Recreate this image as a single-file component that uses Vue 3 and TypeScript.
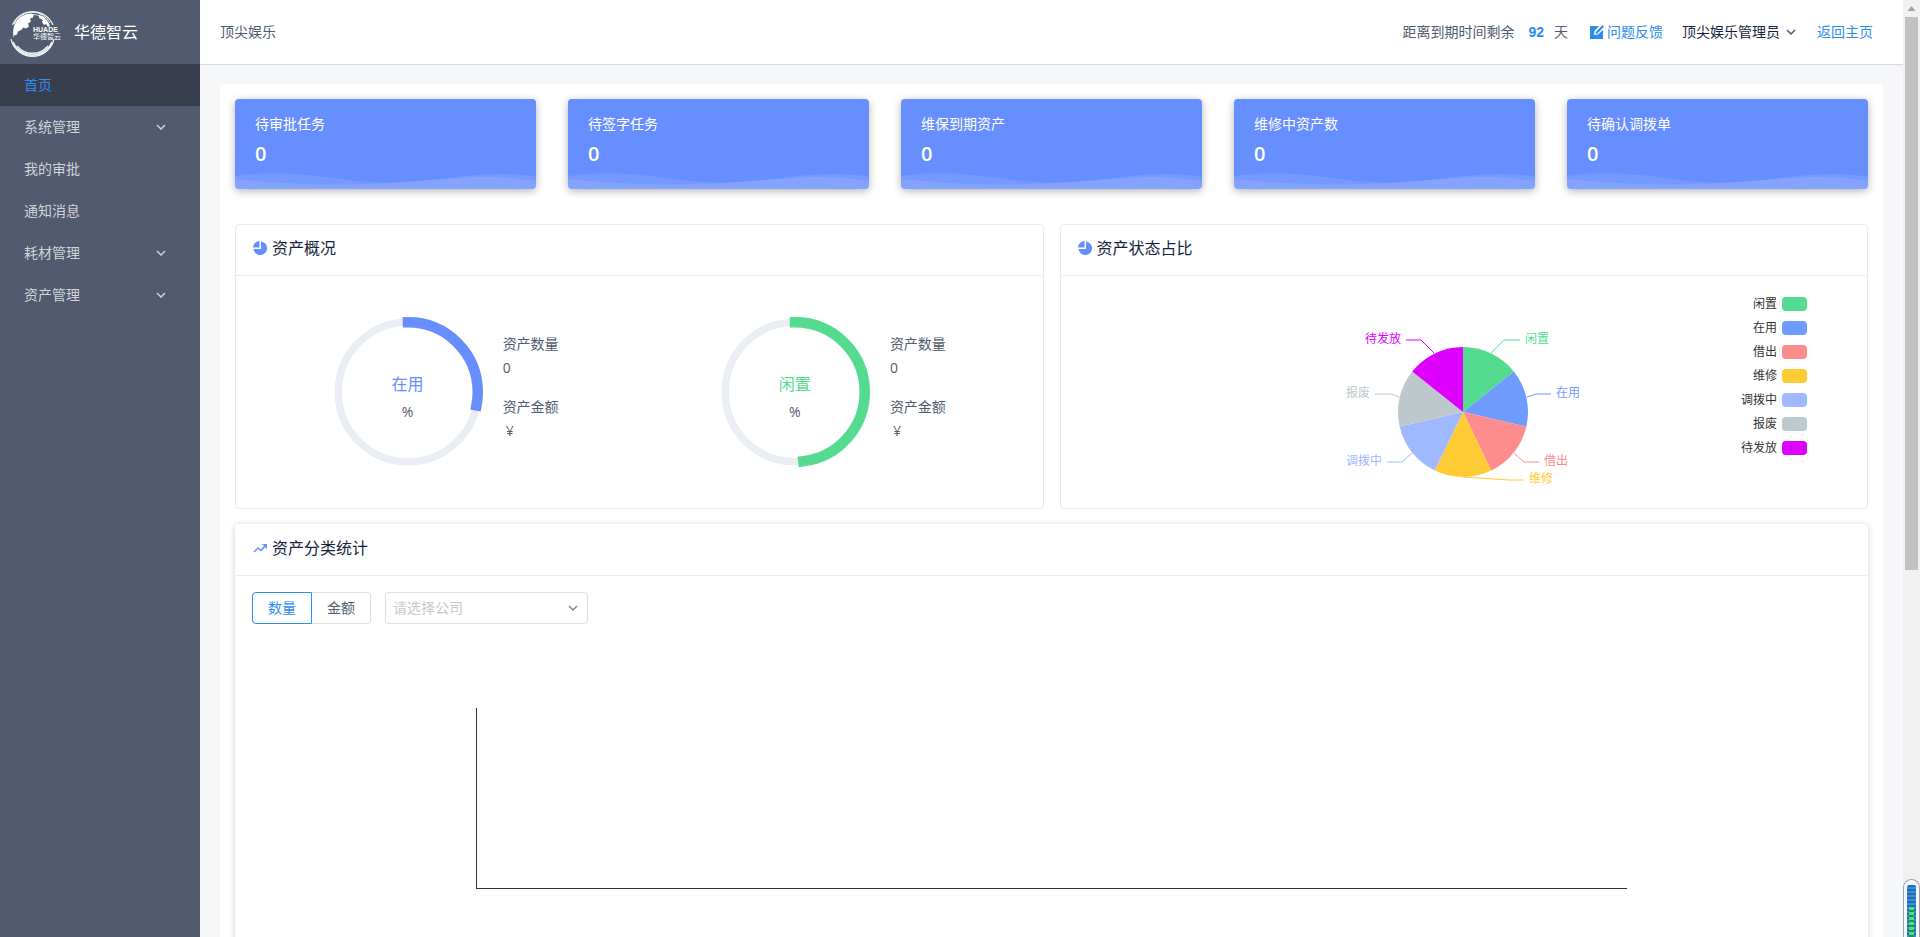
<script setup lang="ts">
import { ref } from 'vue'

interface MenuItem { label: string; expandable: boolean; active: boolean }
interface Gauge { name: string; color: string; percent: number }
interface Slice {
  name: string
  color: string
  line: string
  x: number
  y: number
  anchor: 'start' | 'end'
}

const menu: MenuItem[] = [
  { label: '首页', expandable: false, active: true },
  { label: '系统管理', expandable: true, active: false },
  { label: '我的审批', expandable: false, active: false },
  { label: '通知消息', expandable: false, active: false },
  { label: '耗材管理', expandable: true, active: false },
  { label: '资产管理', expandable: true, active: false },
]

const stats = ['待审批任务', '待签字任务', '维保到期资产', '维修中资产数', '待确认调拨单']

const gauges: Gauge[] = [
  { name: '在用', color: '#668eff', percent: 28 },
  { name: '闲置', color: '#55db90', percent: 48 },
]

const slices: Slice[] = [
  { name: '闲置', color: '#55db90', line: '177,77 190,64 206,64', x: 211, y: 67, anchor: 'start' },
  { name: '在用', color: '#6f9bff', line: '213,121 222,118 237,118', x: 242, y: 121, anchor: 'start' },
  { name: '借出', color: '#fd8c8c', line: '200,177 210,186 225,186', x: 230, y: 189, anchor: 'start' },
  { name: '维修', color: '#ffcb34', line: '149,201 195,204 210,204', x: 215, y: 207, anchor: 'start' },
  { name: '调拨中', color: '#9fb8ff', line: '98,177 88,186 73,186', x: 68, y: 189, anchor: 'end' },
  { name: '报废', color: '#bdc8cd', line: '85,121 77,118 61,118', x: 56, y: 121, anchor: 'end' },
  { name: '待发放', color: '#dd00ff', line: '120,77 107,64 92,64', x: 87, y: 67, anchor: 'end' },
]

const RADIUS = 65
const CX = 149
const CY = 136

function slicePath(index: number): string {
  const step = (Math.PI * 2) / slices.length
  const point = (a: number) =>
    `${(CX + RADIUS * Math.sin(a)).toFixed(2)} ${(CY - RADIUS * Math.cos(a)).toFixed(2)}`
  return `M${CX} ${CY}L${point(step * index)}A${RADIUS} ${RADIUS} 0 0 1 ${point(step * (index + 1))}Z`
}

function dash(percent: number): string {
  const length = 2 * Math.PI * 46.5
  return `${(length * percent) / 100} ${length}`
}

const mode = ref<'count' | 'amount'>('count')
const company = ref('')
</script>

<template>
  <div class="layout">
    <aside class="sidebar">
      <div class="brand">
        <svg class="brand-logo" viewBox="0 0 52 48" aria-hidden="true">
          <g fill="none" stroke="#eef1f5">
            <path d="M4.500 17A22 22 0 0 1 45 17" stroke-width="1.200" />
            <path d="M6 16A20 20 0 0 1 42 15" stroke-width="1" />
            <path d="M9 13A19 19 0 0 1 38 13" stroke-width=".8" />
            <path d="M3 31A22 22 0 0 0 46 31" stroke-width="1.200" />
            <path d="M5 34A21 21 0 0 0 44 34" stroke-width="1.800" />
            <path d="M9 38A20 20 0 0 0 40 38" stroke-width="1.500" />
          </g>
          <path fill="#fff" d="M6 30C3 19 9 8 20 6l3-.5 3 1-1 3-3 1 1 3-3 2 1 3-3 2-3-1-1 2-4 2-1 3-3 1z" />
          <path fill="#fff" d="M31 7c5 1 9 5 11 11l-2 1-2-3-2 1-2-3 1-2-4-2z" />
          <text class="logo-latin" x="25" y="24">HUADE</text>
          <text class="logo-cn" x="25" y="31">华德智云</text>
        </svg>
        <span>华德智云</span>
      </div>
      <nav>
        <a v-for="m in menu" :key="m.label" href="#" class="menu-item" :class="{ active: m.active }">
          <span>{{ m.label }}</span>
          <svg v-if="m.expandable" class="chevron" viewBox="0 0 10 6" aria-hidden="true">
            <path d="M1 1l4 4 4-4" />
          </svg>
        </a>
      </nav>
    </aside>

    <div class="main">
      <header class="topbar">
        <span class="company">顶尖娱乐</span>
        <div class="topbar-right">
          <span class="expiry">距离到期时间剩余<b>92</b>天</span>
          <a href="#" class="feedback">
            <svg viewBox="0 0 14 14" aria-hidden="true">
              <path fill="#2d8cf0" d="M0 1h9L4.500 6 4 10l4-.500L13 5v9H0z" />
              <path fill="#2d8cf0" d="M12.500 0L14 1.500 7.500 8.500 5.500 9l.4-2z" />
            </svg>
            问题反馈
          </a>
          <button type="button" class="user">
            顶尖娱乐管理员
            <svg class="chevron" viewBox="0 0 10 6" aria-hidden="true"><path d="M1 1l4 4 4-4" /></svg>
          </button>
          <a href="#">返回主页</a>
        </div>
      </header>

      <main class="panel">
        <section class="stats">
          <article v-for="s in stats" :key="s" class="stat">
            <span>{{ s }}</span>
            <strong>0</strong>
            <svg class="wave" viewBox="0 0 301 18" preserveAspectRatio="none" aria-hidden="true">
              <path d="M0 5C35 0 65 3 90 6s45 7 80 5 70-9 100-8 31 3 31 3v12H0z" />
              <path d="M0 8c50 5 90 6 130 5S220 6 250 6s40 3 51 4v8H0z" />
            </svg>
          </article>
        </section>

        <section class="row">
          <article class="card">
            <h2>
              <svg viewBox="0 0 14 14" aria-hidden="true">
                <path d="M6.500 0v6.500H0A6.500 6.500 0 0 1 6.500 0z" />
                <path d="M8 .5V8H.5A6.800 6.800 0 1 0 8 .5z" />
              </svg>
              资产概况
            </h2>
            <div class="gauges">
              <div v-for="g in gauges" :key="g.name" class="gauge">
                <div class="ring">
                  <svg viewBox="0 0 100 100" aria-hidden="true">
                    <circle cx="50" cy="50" r="46.5" stroke="#eaeef2" stroke-width="5" />
                    <circle
                      cx="50" cy="50" r="46.5" stroke-width="7" stroke-linecap="square"
                      :stroke="g.color" :stroke-dasharray="dash(g.percent)" transform="rotate(-90 50 50)"
                    />
                  </svg>
                  <div class="ring-text">
                    <span class="ring-name" :style="{ color: g.color }">{{ g.name }}</span>
                    <span>%</span>
                  </div>
                </div>
                <dl>
                  <dt>资产数量</dt>
                  <dd>0</dd>
                  <dt>资产金额</dt>
                  <dd class="money">¥</dd>
                </dl>
              </div>
            </div>
          </article>

          <article class="card">
            <h2>
              <svg viewBox="0 0 14 14" aria-hidden="true">
                <path d="M6.500 0v6.500H0A6.500 6.500 0 0 1 6.500 0z" />
                <path d="M8 .5V8H.5A6.800 6.800 0 1 0 8 .5z" />
              </svg>
              资产状态占比
            </h2>
            <div class="status">
              <svg class="pie" viewBox="0 0 300 232" role="img" aria-label="资产状态占比">
                <g v-for="(s, i) in slices" :key="s.name">
                  <path :d="slicePath(i)" :fill="s.color" />
                  <polyline :points="s.line" :stroke="s.color" fill="none" />
                  <text :x="s.x" :y="s.y" :fill="s.color" :text-anchor="s.anchor">{{ s.name }}</text>
                </g>
              </svg>
              <ul class="legend">
                <li v-for="s in slices" :key="s.name">
                  {{ s.name }}<i :style="{ background: s.color }"></i>
                </li>
              </ul>
            </div>
          </article>
        </section>

        <section class="card raised">
          <h2>
            <svg viewBox="0 0 14 14" aria-hidden="true">
              <path class="trend" d="M1 11l4-4 3 2.500L12 5" />
              <path d="M9 3h5v5z" />
            </svg>
            资产分类统计
          </h2>
          <div class="toolbar">
            <div class="segments">
              <button type="button" :class="{ on: mode === 'count' }" @click="mode = 'count'">数量</button>
              <button type="button" :class="{ on: mode === 'amount' }" @click="mode = 'amount'">金额</button>
            </div>
            <div class="picker">
              <select v-model="company" aria-label="请选择公司">
                <option value="">请选择公司</option>
              </select>
              <svg class="chevron" viewBox="0 0 10 6" aria-hidden="true"><path d="M1 1l4 4 4-4" /></svg>
            </div>
          </div>
          <div class="chart"><div class="axes"></div></div>
        </section>
      </main>
    </div>

    <div class="scrollbar" aria-hidden="true">
      <svg viewBox="0 0 17 17"><path d="M4.500 11h8l-4-5z" fill="#a3a3a3" /></svg>
      <div class="thumb"></div>
    </div>
    <div class="meter" aria-hidden="true"><div><i></i></div></div>
  </div>
</template>

<style>
body {
  margin: 0;
  overflow: hidden;
}
</style>

<style scoped>
.layout {
  position: relative;
  display: grid;
  grid-template-columns: 200px minmax(0, 1fr) 17px;
  height: 100vh;
  overflow: hidden;
  background: #f5f7f9;
  color: #515a6e;
  font: 14px/20px "Open Sans", "Noto Sans CJK SC", sans-serif;
}
a {
  color: #2d8cf0;
  text-decoration: none;
}
button,
select {
  font: inherit;
  color: inherit;
  cursor: pointer;
}
.chevron {
  width: 10px;
  height: 6px;
  fill: none;
  stroke: currentColor;
  stroke-width: 1.5;
}

.sidebar {
  background: #515a6e;
}
.brand {
  display: flex;
  align-items: center;
  gap: 14px;
  height: 64px;
  padding-left: 8px;
  color: #fff;
  font-size: 16px;
}
.brand-logo {
  width: 52px;
  height: 48px;
  overflow: visible;
}
.brand-logo text {
  fill: #fff;
}
.logo-latin {
  font: bold 7px "Liberation Sans", sans-serif;
}
.logo-cn {
  font: 7px "Noto Sans CJK SC", sans-serif;
}
.menu-item {
  display: flex;
  align-items: center;
  justify-content: space-between;
  height: 42px;
  padding: 0 34px 0 24px;
  color: #d0d3d9;
}
.menu-item.active {
  background: #383e4e;
  color: #2d8cf0;
}

.main {
  display: flex;
  flex-direction: column;
  min-width: 0;
  overflow: hidden;
}
.topbar {
  display: flex;
  flex: none;
  align-items: center;
  justify-content: space-between;
  height: 64px;
  padding: 0 30px 0 20px;
  background: #fff;
  box-shadow: 0 1px 1px rgba(0, 0, 0, 0.12);
}
.topbar-right {
  display: flex;
  align-items: center;
}
.expiry b {
  margin: 0 10px 0 14px;
  color: #2d8cf0;
  font-family: "Liberation Sans", sans-serif;
}
.feedback {
  display: flex;
  align-items: center;
  gap: 3px;
  margin: 0 19px 0 22px;
}
.feedback svg {
  width: 14px;
  height: 14px;
}
.user {
  display: flex;
  align-items: center;
  gap: 6px;
  margin-right: 21px;
  padding: 0;
  border: 0;
  background: none;
  color: #17233d;
}
.user .chevron {
  color: #515a6e;
}

.panel {
  flex: none;
  margin: 20px 20px 0;
  padding: 15px;
  background: #fff;
}
.stats {
  display: grid;
  grid-template-columns: repeat(5, 1fr);
  gap: 32px;
}
.stat {
  position: relative;
  display: flex;
  flex-direction: column;
  gap: 6px;
  box-sizing: border-box;
  height: 90px;
  padding: 15px 20px;
  overflow: hidden;
  border-radius: 4px;
  background: #668eff;
  box-shadow: 0 2px 8px rgba(0, 0, 0, 0.3);
  color: #fff;
}
.stat strong {
  font-size: 20px;
  font-weight: 600;
  line-height: 28px;
}
.wave {
  position: absolute;
  left: 0;
  bottom: 0;
  width: 100%;
  height: 18px;
  fill: rgba(255, 255, 255, 0.1);
}

.row {
  display: grid;
  grid-template-columns: 1fr 1fr;
  gap: 16px;
  margin: 35px 0 15px;
}
.card {
  border: 1px solid #e8eaec;
  border-radius: 4px;
  background: #fff;
}
.card.raised {
  border-color: transparent;
  box-shadow: 0 1px 6px rgba(0, 0, 0, 0.2);
}
h2 {
  display: flex;
  align-items: center;
  gap: 5px;
  height: 51px;
  box-sizing: border-box;
  margin: 0;
  padding: 0 17px 4px;
  border-bottom: 1px solid #e8eaec;
  color: #17233d;
  font-size: 16px;
  font-weight: 400;
}
h2 svg {
  width: 14px;
  height: 14px;
  fill: #668eff;
}
h2 .trend {
  fill: none;
  stroke: #668eff;
  stroke-width: 1.5;
}

.gauges {
  display: grid;
  grid-template-columns: 1fr 1fr;
  height: 232px;
  padding: 0 16px;
}
.gauge {
  display: flex;
  align-items: center;
  justify-content: center;
  gap: 20px;
}
.ring {
  display: grid;
  width: 150px;
  height: 150px;
}
.ring > * {
  grid-area: 1 / 1;
}
.ring svg {
  fill: none;
}
.ring-text {
  display: flex;
  flex-direction: column;
  align-items: center;
  justify-content: center;
  gap: 8px;
  padding-top: 12px;
}
.ring-name {
  font-size: 16px;
}
dl {
  margin: 0;
  padding-bottom: 10px;
}
dt,
dd {
  margin: 0;
  line-height: 24px;
}
dd + dt {
  margin-top: 15px;
}
.money {
  padding-left: 3px;
}

.status {
  display: grid;
  grid-template-columns: 1fr 300px 1fr;
  height: 232px;
}
.pie {
  grid-column: 2;
  width: 300px;
  height: 232px;
  font-size: 12px;
}
.legend {
  justify-self: end;
  margin: 0;
  padding: 16px 60px 0 0;
  list-style: none;
  color: #333;
  font-size: 12px;
}
.legend li {
  display: flex;
  align-items: center;
  justify-content: flex-end;
  gap: 5px;
  height: 24px;
}
.legend i {
  width: 25px;
  height: 14px;
  border-radius: 4px;
}

.toolbar {
  display: flex;
  gap: 14px;
  padding: 16px 16px 0;
}
.segments {
  display: flex;
}
.segments button {
  width: 60px;
  height: 32px;
  padding: 0;
  border: 1px solid #dcdee2;
  border-radius: 0 4px 4px 0;
  background: #fff;
}
.segments button:first-child {
  border-radius: 4px 0 0 4px;
}
.segments button + button {
  margin-left: -1px;
}
.segments .on {
  z-index: 1;
  border-color: #2d8cf0;
  color: #2d8cf0;
}
.picker {
  display: grid;
  align-items: center;
  width: 203px;
}
.picker > * {
  grid-area: 1 / 1;
}
.picker select {
  width: 100%;
  height: 32px;
  padding: 0 24px 0 7px;
  border: 1px solid #dcdee2;
  border-radius: 4px;
  background: #fff;
  color: #c5c8ce;
  appearance: none;
}
.picker .chevron {
  justify-self: end;
  margin-right: 10px;
  color: #808695;
  pointer-events: none;
}
.chart {
  padding: 84px 16px 120px;
}
.axes {
  height: 180px;
  margin: 0 14%;
  border: solid #333;
  border-width: 0 0 1px 1px;
}

.scrollbar {
  background: #f1f1f1;
}
.scrollbar svg {
  display: block;
  width: 17px;
  height: 17px;
}
.thumb {
  height: 59%;
  margin: 0 2px;
  background: #c1c1c1;
}
.meter {
  position: absolute;
  right: 0;
  bottom: 0;
  box-sizing: border-box;
  width: 17px;
  height: 58px;
  padding: 5px 3px 0;
  border: 1px solid #9a9fa5;
  border-bottom: 0;
  border-radius: 9px 9px 0 0;
  background: #f4f8fc;
}
.meter div {
  height: 100%;
  padding-top: 22px;
  box-sizing: border-box;
  border-radius: 2px 2px 0 0;
  background: repeating-linear-gradient(#1b6fb4 0 2px, #3d8fd0 2px 4px);
}
.meter i {
  display: block;
  height: 100%;
  margin: 0 2px;
  background: repeating-linear-gradient(#4fe07a 0 3px, #1d8f5a 3px 5px);
}
</style>
